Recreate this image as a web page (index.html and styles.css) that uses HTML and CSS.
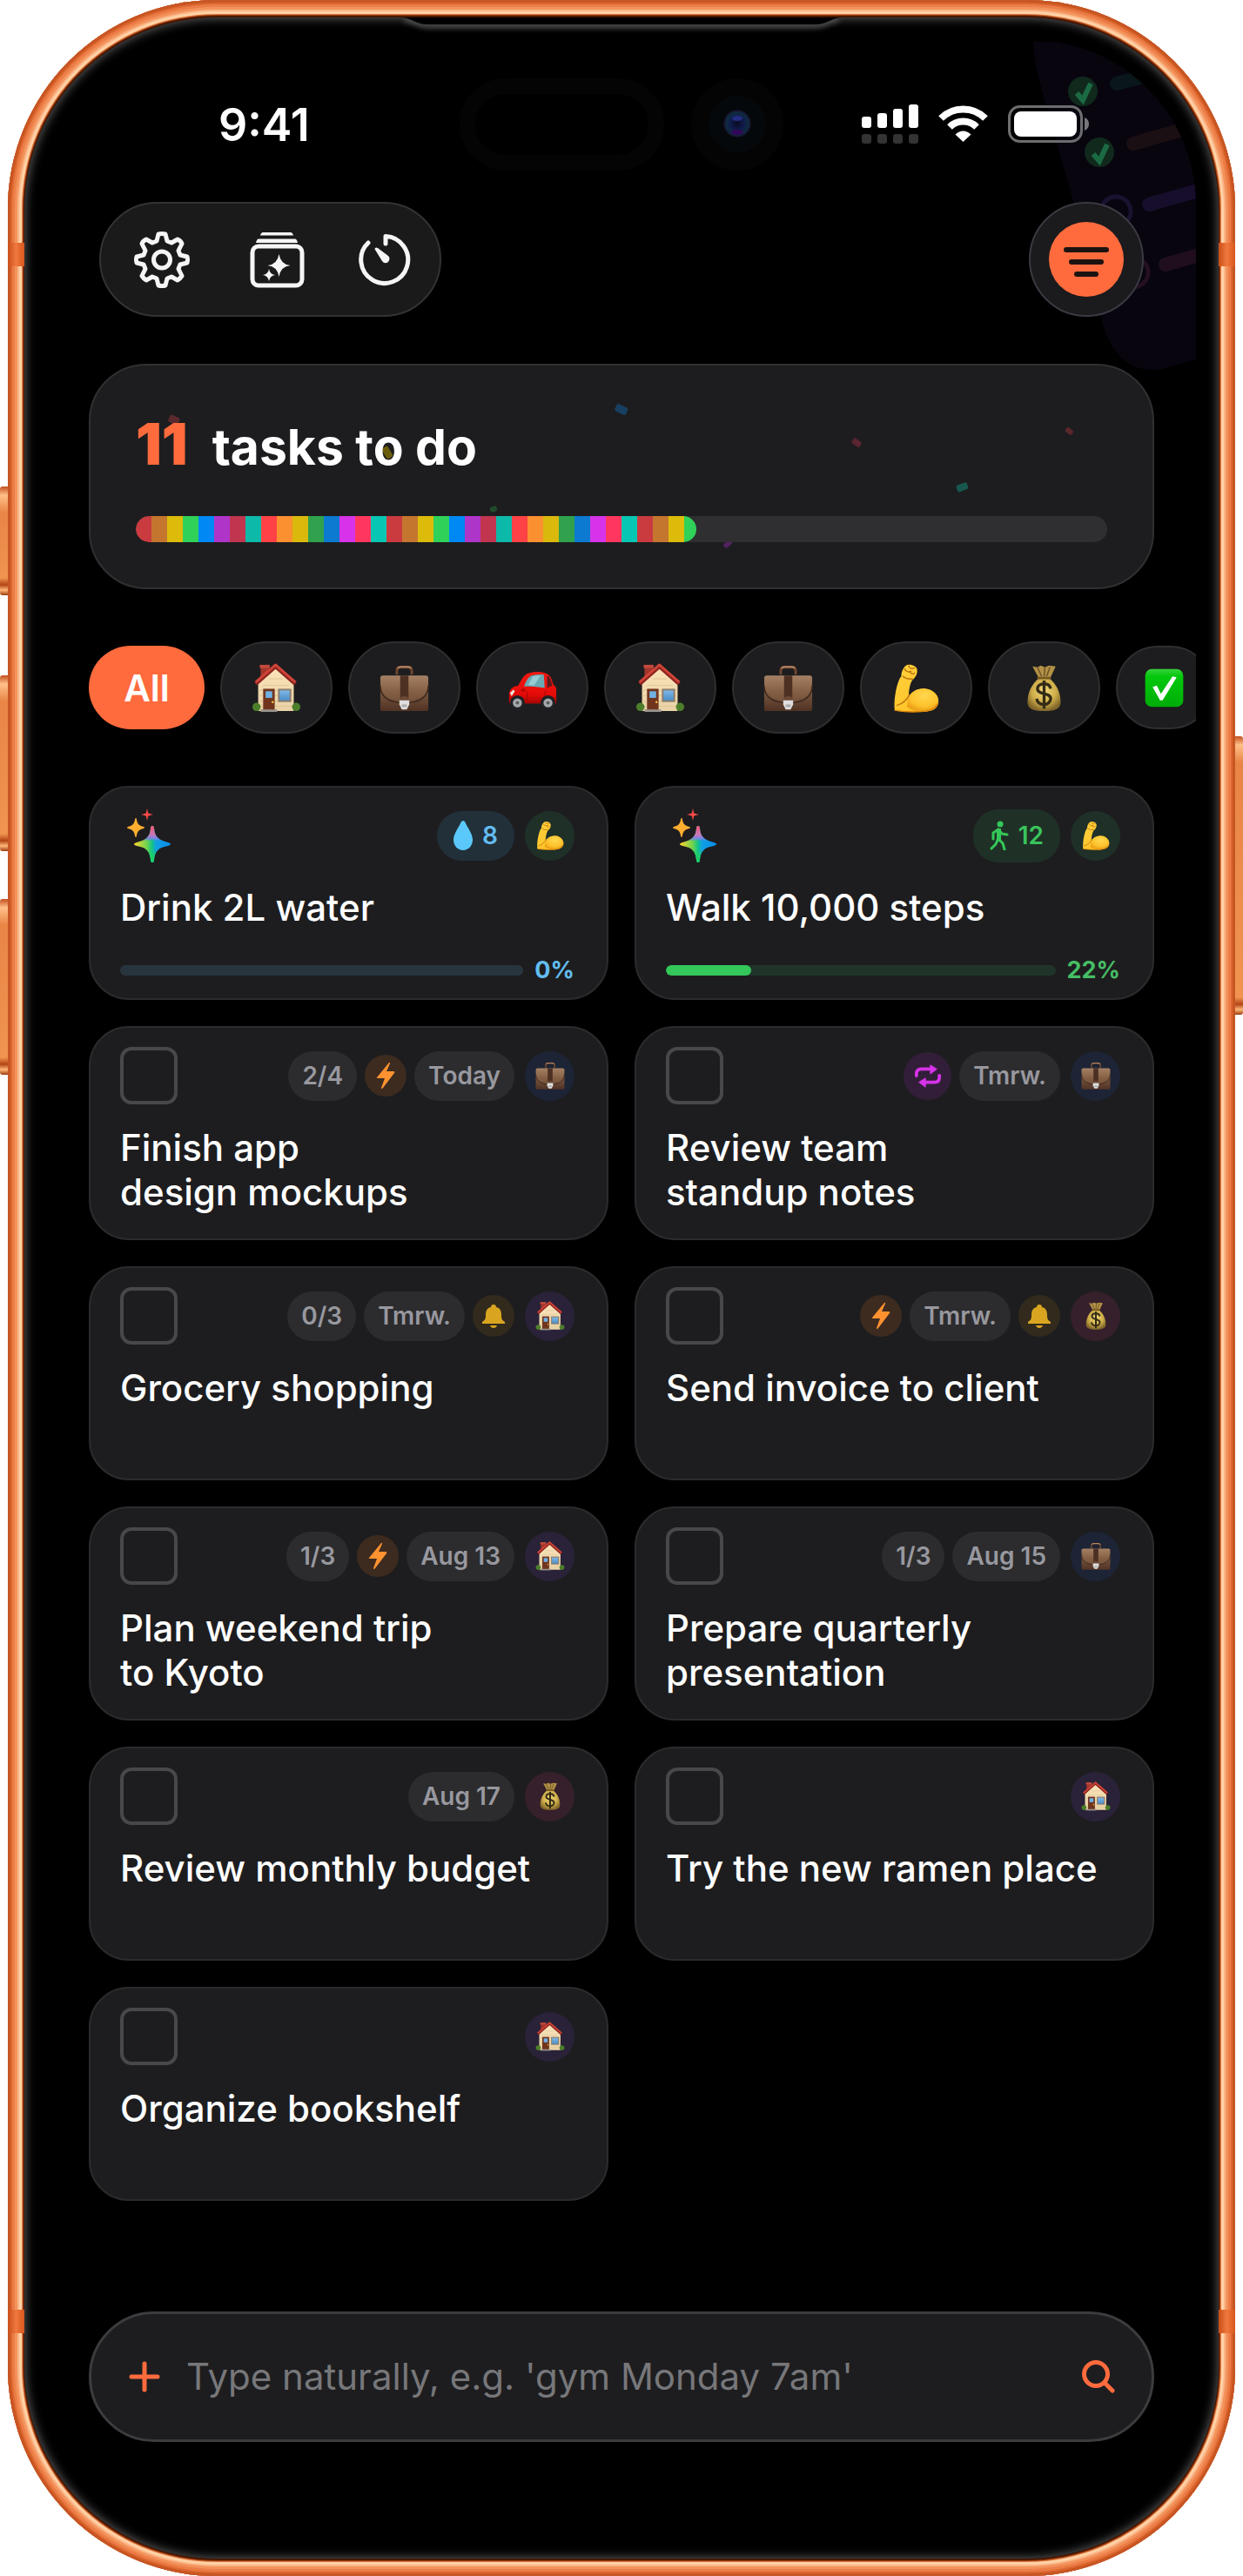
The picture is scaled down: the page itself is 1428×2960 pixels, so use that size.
FILE: index.html
```html
<!DOCTYPE html>
<html lang="en">
<head>
<meta charset="utf-8">
<meta name="viewport" content="width=device-width, initial-scale=1">
<title>Tasks</title>
<link rel="stylesheet" href="styles.css">
</head>
<body>
<svg class="defs" width="0" height="0" aria-hidden="true">
  <defs>
    <linearGradient id="wall" x1="0" y1="0" x2="0" y2="1"><stop offset="0" stop-color="#fbe3ba"/><stop offset="1" stop-color="#e8d2a6"/></linearGradient>
    <linearGradient id="glass" x1="0" y1="0" x2="0" y2="1"><stop offset="0" stop-color="#7db8e8"/><stop offset="1" stop-color="#4d8fc9"/></linearGradient>
    <linearGradient id="leather" x1="0" y1="0" x2="0" y2="1"><stop offset="0" stop-color="#a88468"/><stop offset=".45" stop-color="#7b583f"/><stop offset="1" stop-color="#4f3225"/></linearGradient>
    <linearGradient id="skin" x1="0" y1="0" x2="1" y2="1"><stop offset="0" stop-color="#ffd23e"/><stop offset=".6" stop-color="#ffc52b"/><stop offset="1" stop-color="#e89a12"/></linearGradient>
    <radialGradient id="bicep" cx=".55" cy=".3" r=".75"><stop offset="0" stop-color="#ffd84f"/><stop offset=".6" stop-color="#fdc22c"/><stop offset="1" stop-color="#e5940f"/></radialGradient>
    <linearGradient id="paint" x1="0" y1="0" x2="0" y2="1"><stop offset="0" stop-color="#f01a12"/><stop offset=".7" stop-color="#e60b08"/><stop offset="1" stop-color="#a80505"/></linearGradient>
    <radialGradient id="sack" cx=".5" cy=".4" r=".6"><stop offset="0" stop-color="#f2d777"/><stop offset=".6" stop-color="#cfae4a"/><stop offset="1" stop-color="#80652a"/></radialGradient>
    <linearGradient id="tick" x1="0" y1="0" x2="0" y2="1"><stop offset="0" stop-color="#39d33c"/><stop offset=".2" stop-color="#04c80c"/><stop offset="1" stop-color="#00ad08"/></linearGradient>
    <linearGradient id="spectrum" x1="0" x2="1"><stop offset="0" stop-color="#ffd22e"/><stop offset=".35" stop-color="#6fd44d"/><stop offset=".5" stop-color="#12c389"/><stop offset=".6" stop-color="#0fa0e0"/><stop offset="1" stop-color="#0b8dea"/></linearGradient>
    <linearGradient id="spectrum-top" x1="0" y1="0" x2="0" y2="1"><stop offset="0" stop-color="#f4567a"/><stop offset=".24" stop-color="#c777b5"/><stop offset=".34" stop-color="#7f83e6"/><stop offset=".42" stop-color="#4a90e8" stop-opacity="0"/><stop offset=".65" stop-color="#1ccf5f" stop-opacity="0"/><stop offset=".85" stop-color="#1ccf6a"/></linearGradient>
    <radialGradient id="lens" cx=".5" cy=".5" r=".5"><stop offset="0" stop-color="#0a0c22"/><stop offset=".5" stop-color="#111a4c"/><stop offset=".8" stop-color="#0d2c40"/><stop offset="1" stop-color="#1a1230"/></radialGradient>

    <symbol id="house" viewBox="0 0 60 60">
      <path d="M11 3h10v20H11z" fill="#a3362c"/><path d="M10 2h12v4H10z" fill="#c34a3c"/>
      <path d="M8 25 29 5l22 20v33H8z" fill="url(#wall)"/>
      <path d="M8 33h43M8 39h43M8 46h43M8 52h43M14 27h31M21 19h17" stroke="#dcc08e" stroke-width=".8"/>
      <path d="M5 25 29 4l24 21" fill="none" stroke="#8e241f" stroke-width="5" stroke-linejoin="round"/><path d="M5 23 29 2l24 21" fill="none" stroke="#cf4438" stroke-width="3" stroke-linejoin="round"/>
      <path d="M14 31h14v26H14z" fill="#71351f"/><path d="M17 34h8v8h-8z" fill="#6fb1e4"/><circle cx="25.500" cy="47" r="1.300" fill="#f5c542"/>
      <path d="M32 31h16v16H32z" fill="#8a7b6c"/><path d="M34 33h12v12H34z" fill="url(#glass)"/>
      <circle cx="6" cy="53" r="5" fill="#4d7f2b"/><circle cx="54" cy="53" r="5" fill="#4d7f2b"/><path d="M11 56h20v3H11z" fill="#9a948c"/>
    </symbol>
    <symbol id="briefcase" viewBox="0 0 60 60">
      <path d="M21 14V9q0-4 4-4h10q4 0 4 4v5" fill="none" stroke="#6d4630" stroke-width="3"/><path d="M22 6.500q1-2 4-2h8q3 0 4 2" fill="none" stroke="#b78562" stroke-width="2"/>
      <rect x="1" y="15" width="58" height="43" rx="3" fill="url(#leather)"/>
      <path d="M1 27c0 15 12 21 29 21s29-6 29-21" fill="none" stroke="#3f281c" stroke-width="1.500"/>
      <path d="M2 27C3 40 14 46 30 46s27-6 28-19V17H2z" fill="#a07657" opacity=".28"/>
      <path d="M25 15h10v29H25z" fill="#4d3022"/><path d="M24 46q0-6 6-6t6 6z" fill="#6b4935"/>
      <path d="M24 45h12v5l-3 6h-6l-3-6z" fill="#dedede"/><path d="M27 50h6v3h-6z" fill="#aaa"/>
    </symbol>
    <symbol id="arm" viewBox="0 0 60 60">
      <path d="M4 57C3 46 5 33 8 24c1-3 2-6 4-8 0-6 3-12 7-14 4-1 11 1 12 5 1 5-1 9-5 13-3 3-5 12-5 21 4-7 12-11 21-10 9 1 15 8 15 15 0 9-8 13-22 13-12 0-23 0-31-2z" fill="url(#skin)"/>
      <path d="M20 43c3-8 11-13 21-12 10 1 16 8 16 15 0 9-8 13-21 13 0 0-8-1-17-6z" fill="url(#bicep)"/>
      <path d="M16 7q3 5 8 3m-3-7q1 5 7 3m-5 4q1 5 5 2M14 16q5 4 12 3M7 51q10-3 15-13" fill="none" stroke="#ba7410" stroke-width="1.400" stroke-linecap="round"/>
      <path d="M4 57q24 4 42 0 8-3 10-8" fill="none" stroke="#dc850c" stroke-width="1.500"/>
    </symbol>
    <symbol id="car" viewBox="0 0 60 60">
      <path d="M2 47V36c1-5 5-8 11-9 4-7 7-14 13-15q10-3 20 0 7 2 9 13l4 5v19H2z" fill="url(#paint)"/>
      <path d="M20 28q4-11 9-13 9-2 15-1l1 16q-12-2-25-2z" fill="#69aab5"/><path d="M25 26 31 16q5-1 9-1l-8 12z" fill="#99ccd2"/>
      <path d="M48 15q4 1 6 12l-6 3z" fill="#581a1b"/><path d="M22 31q-5-1-6 2 2 3 6 1z" fill="#bb0808"/>
      <path d="m3 36 4-4 2 2-4 6z" fill="#e9e5dd"/><path d="M24 34v13h20l2-14" fill="none" stroke="#9e0808" stroke-width="1"/>
      <circle cx="12" cy="48" r="9" fill="#202125"/><circle cx="12" cy="48" r="5.500" fill="#a4a8aa"/><circle cx="12" cy="48" r="2" fill="#55595b"/>
      <circle cx="49" cy="48" r="9" fill="#202125"/><circle cx="49" cy="48" r="5.500" fill="#a4a8aa"/><circle cx="49" cy="48" r="2" fill="#55595b"/>
    </symbol>
    <symbol id="money" viewBox="0 0 60 60">
      <path d="m16 4 6 1 4-2 5 2 5-2 8 1-7 15H24z" fill="#b39146"/><path d="m22 5 5 11m4-11-1 11m7-11-4 11" stroke="#695226" stroke-width="1.500"/>
      <path d="M24 18h12c9 7 14 18 14 29 0 7-5 11-20 11s-20-4-20-11c0-11 5-22 14-29z" fill="url(#sack)"/><path d="M23 18h14" stroke="#755920" stroke-width="3" stroke-linecap="round"/>
      <path d="M38 31c-1-5-4-6-8-6s-8 2-8 6c0 8 16 4 16 12 0 4-4 7-8 7s-8-2-9-7M30 21v34" fill="none" stroke="#332b16" stroke-width="3.500"/>
    </symbol>
    <symbol id="done" viewBox="0 0 60 60"><rect x="7" y="7" width="46" height="46" rx="8" fill="url(#tick)"/><path d="m16 29 5-2 5 10L40 16l5 1-17 28h-3z" fill="#fff"/></symbol>
    <symbol id="bolt" viewBox="0 0 32 32"><path d="M20 1 6 18q-1 1 1 1h8l-4 11q0 2 2 0l13-17q1-2-1-2h-8l4-9q0-2-1-1z" fill="#ff9230"/></symbol>
    <symbol id="bell" viewBox="0 0 32 32"><path d="M16 3c2 0 3 1 3 3 5 1 6 5 6 9 0 5 1 6 4 8v2H3v-2c3-2 4-3 4-8 0-4 1-8 6-9 0-2 1-3 3-3zM12 27h8q-1 3-4 3t-4-3z" fill="#d9a521"/></symbol>
    <symbol id="repeat" viewBox="0 0 34 34"><path d="M3 17v-2q0-6 6-6h12M31 17v2q0 6-6 6H13" fill="none" stroke="#d633ea" stroke-width="4" stroke-linecap="round"/><path d="m20 4 8 5-8 6zM14 20l-8 5 8 6z" fill="#d633ea" stroke="#d633ea" stroke-width="1" stroke-linejoin="round"/></symbol>
    <symbol id="sparkle" viewBox="0 0 66 66">
      <path d="M37 22q2 0 2 3c1 9 4 13 16 16 4 1 4 3 0 4-12 2-15 7-16 16q0 3-2 3t-2-3c-1-9-4-14-16-16-4-1-4-3 0-4 12-3 15-7 16-16q0-3 2-3z" fill="url(#spectrum)"/>
      <path d="M37 22q2 0 2 3c1 9 4 13 16 16 4 1 4 3 0 4-12 2-15 7-16 16q0 3-2 3t-2-3c-1-9-4-14-16-16-4-1-4-3 0-4 12-3 15-7 16-16q0-3 2-3z" fill="url(#spectrum-top)"/>
      <path d="M18 13q1 0 1 2c1 5 3 7 8 8q2 1 0 2c-5 1-7 3-8 8q0 2-1 2t-1-2c-1-5-3-7-8-8q-2-1 0-2c5-1 7-3 8-8q0-2 1-2z" fill="#ffae30"/>
      <path d="M31 2q1 4 1 5 1 1 6 2-5 1-6 2 0 1-1 5-1-4-1-5-1-1-6-2 5-1 6-2 0-1 1-5z" fill="#ff4a48"/>
    </symbol>
  </defs>
</svg>

<div class="phone">
  <span class="key key-action"></span><span class="key key-up"></span><span class="key key-down"></span><span class="key key-power"></span>
  <div class="frame">
    <span class="band band-tl"></span><span class="band band-tr"></span><span class="band band-bl"></span><span class="band band-br"></span>
    <div class="bezel">
      <svg class="earpiece" viewBox="0 0 510 26" aria-hidden="true"><defs><filter id="soft" x="-5%" y="-100%" width="110%" height="400%"><feGaussianBlur stdDeviation="3"/></filter></defs><path d="M6 2c12 0 14 7 26 7h446c12 0 14-7 26-7" fill="none" stroke="#5a5a5a" stroke-width="6" filter="url(#soft)"/><path d="M0 0h510c-14 0-18 8-32 8H32C18 8 14 0 0 0z" fill="#000"/></svg>
      <main class="screen">
        <svg class="ghost" viewBox="0 0 190 380" aria-hidden="true">
          <path d="M3 2 190 0v367l-35 10c-30 8-60-6-72-51L49 186 11 50Q3 20 3 2z" fill="#08050f"/>
          <circle cx="60" cy="59" r="17" fill="#10291c"/><path d="m53 61 7 8 9-19" fill="none" stroke="#1b6a43" stroke-width="6"/>
          <circle cx="79" cy="129" r="17" fill="#10291c"/><path d="m72 131 7 8 9-19" fill="none" stroke="#1b6a43" stroke-width="6"/>
          <circle cx="98" cy="197" r="17" fill="none" stroke="#1a1230" stroke-width="5"/><circle cx="118" cy="267" r="17" fill="none" stroke="#241020" stroke-width="5"/>
          <g stroke-width="16" stroke-linecap="round"><path d="m99 50 60-16" stroke="#0a171a"/><path d="m118 119 70-20" stroke="#1a0f13"/><path d="m136 189 70-20" stroke="#170e2c"/><path d="m155 258 70-20" stroke="#200e1f"/></g>
        </svg>

        <header class="status">
          <time class="clock">9:41</time>
          <svg class="island" viewBox="0 0 372 106" aria-hidden="true"><rect x="9" y="9" width="217" height="88" rx="44" fill="none" stroke="#040404" stroke-width="18"/><circle cx="319" cy="53" r="53" fill="#040404"/><circle cx="319" cy="53" r="33" fill="#05080b"/><circle cx="319" cy="52" r="15.500" fill="url(#lens)"/><ellipse cx="319" cy="46" rx="6" ry="3" fill="#232e80"/><ellipse cx="319" cy="62" rx="7" ry="3" fill="#33065a"/></svg>
          <svg class="signals" viewBox="0 0 262 46" role="img" aria-label="Signal, Wi-Fi and battery full">
            <g fill="#fff"><rect x="0" y="14" width="11" height="13" rx="3"/><rect x="18" y="10" width="11" height="17" rx="3"/><rect x="36" y="5" width="11" height="22" rx="3"/><rect x="54" y="0" width="11" height="27" rx="3"/></g>
            <g fill="#333"><rect x="0" y="34" width="11" height="11" rx="3"/><rect x="18" y="34" width="11" height="11" rx="3"/><rect x="36" y="34" width="11" height="11" rx="3"/><rect x="54" y="34" width="11" height="11" rx="3"/></g>
            <g fill="none" stroke="#fff" stroke-width="8"><path d="M91 16a36 36 0 0 1 51 0"/><path d="M101 26a22 22 0 0 1 31 0"/></g><path d="m107.500 34.500 9 8.500 9-8.500q-9-8-18 0z" fill="#fff"/>
            <rect x="169.500" y="2.500" width="83" height="40" rx="12" fill="none" stroke="#6d6d70" stroke-width="3"/><rect x="175" y="8" width="72" height="29" rx="8" fill="#fff"/><path d="M256 15q5 2 5 7.500t-5 7.500z" fill="#77777a"/>
          </svg>
        </header>

        <nav class="toolbar">
          <div class="tools">
            <button class="tool" aria-label="Settings"><svg viewBox="0 0 66 66"><path d="M29 4q4-1 8 0l2 8 5 2 7-4q4 2 5 5l-4 8 2 5 8 2q1 3 0 7l-8 2-2 5 4 8q-2 3-5 5l-7-4-5 2-2 8q-4 1-8 0l-2-8-5-2-7 4q-3-2-5-5l4-8-2-5-8-2q-1-4 0-7l8-2 2-5-4-8q1-3 5-5l7 4 5-2z"/><circle cx="33" cy="33.500" r="9.500"/></svg></button>
            <button class="tool" aria-label="Smart lists"><svg viewBox="0 0 66 66"><rect x="5" y="18" width="57" height="45" rx="7"/><path d="M17 2h32q2 0 3 3.500H14Q15 2 17 2zM12 9.500h42q2 0 3 4.500H9q1-4.500 3-4.500zM35.500 27q2 12 13 13-11 1-13 13-2-12-13-13 11-1 13-13zM24 44q1 6 7 7-6 1-7 7-1-6-7-7 6-1 7-7z" class="solid"/></svg></button>
            <button class="tool tool-last" aria-label="Timer"><svg viewBox="0 0 66 66"><path d="M33 15V6.500a27 27 0 1 1-20 7.500"/><path d="M21 20q1-1 3 0l12 9q3 3 0 7-4 3-7-1l-8-13q-1-1 0-2z" class="solid"/></svg></button>
          </div>
          <button class="filter" aria-label="Filter and sort"><svg viewBox="0 0 86 86"><circle cx="43" cy="43" r="43" fill="#ff6b3d"/><path d="M20 32h46M26 46h34M32 60h22" stroke="#1c1310" stroke-width="6" stroke-linecap="round"/></svg></button>
        </nav>

        <section class="summary">
          <svg class="confetti" viewBox="0 0 1224 259" aria-hidden="true">
            <rect x="92" y="60" width="12" height="9" rx="2" transform="rotate(25 98 64)" fill="#5c2a2e"/><rect x="605" y="48" width="14" height="9" rx="2" transform="rotate(25 612 52)" fill="#173f61"/><rect x="336" y="98" width="14" height="8" rx="2" transform="rotate(60 343 102)" fill="#6b5c0c"/><rect x="461" y="164" width="8" height="6" rx="2" transform="rotate(-20 465 167)" fill="#1f4b2d"/><rect x="729" y="204" width="10" height="6" rx="2" transform="rotate(-40 734 207)" fill="#522260"/><rect x="877" y="87" width="11" height="7" rx="2" transform="rotate(35 882 90)" fill="#5b2531"/><rect x="1122" y="74" width="9" height="6" rx="2" transform="rotate(40 1126 77)" fill="#5a272b"/><rect x="997" y="138" width="13" height="8" rx="2" transform="rotate(-20 1003 142)" fill="#17574e"/>
          </svg>
          <h1 class="headline"><span class="count">11</span> tasks to do</h1>
          <div class="rainbow" role="progressbar" aria-label="Completed tasks" aria-valuenow="58" aria-valuemin="0" aria-valuemax="100"><div class="rainbow-fill"></div></div>
        </section>

        <div class="chips">
          <button class="chip chip-all">All</button>
          <button class="chip" aria-label="Home"><svg><use href="#house"/></svg></button>
          <button class="chip" aria-label="Work"><svg><use href="#briefcase"/></svg></button>
          <button class="chip" aria-label="Car"><svg><use href="#car"/></svg></button>
          <button class="chip" aria-label="House"><svg><use href="#house"/></svg></button>
          <button class="chip" aria-label="Office"><svg><use href="#briefcase"/></svg></button>
          <button class="chip" aria-label="Health"><svg><use href="#arm"/></svg></button>
          <button class="chip" aria-label="Money"><svg><use href="#money"/></svg></button>
          <button class="chip chip-done" aria-label="Done"><svg><use href="#done"/></svg></button>
        </div>

        <section class="grid">
          <article class="card">
            <div class="top"><svg class="spark"><use href="#sparkle"/></svg><div class="badges"><span class="badge water"><svg viewBox="0 0 22 34"><path d="M11 0q2 0 3 3c2 5 8 12 8 19 0 7-5 12-11 12S0 29 0 22C0 15 6 8 8 3q1-3 3-3z" fill="#5ac8fa"/></svg>8</span><span class="emoji health"><svg><use href="#arm"/></svg></span></div></div>
            <h2 class="title">Drink 2L water</h2>
            <div class="goal water-goal"><div class="track"><div class="fill" style="width:0%"></div></div><span>0%</span></div>
          </article>
          <article class="card">
            <div class="top"><svg class="spark"><use href="#sparkle"/></svg><div class="badges"><span class="badge walk"><svg viewBox="0 0 22 34"><circle cx="12" cy="4" r="3.500" fill="#34c759"/><path d="M10 10 4 14v7M10 10l4 5 6 1M10 10v11l5 5 2 7M9 22l-2 5-5 5" fill="none" stroke="#34c759" stroke-width="3" stroke-linecap="round" stroke-linejoin="round"/><path d="M8 9h5v13H8z" fill="#34c759"/></svg>12</span><span class="emoji health"><svg><use href="#arm"/></svg></span></div></div>
            <h2 class="title">Walk 10,000 steps</h2>
            <div class="goal walk-goal"><div class="track"><div class="fill" style="width:22%"></div></div><span>22%</span></div>
          </article>
          <article class="card">
            <div class="top"><input type="checkbox" id="t1"><div class="badges"><span class="badge">2/4</span><span class="dot urgent"><svg><use href="#bolt"/></svg></span><span class="badge">Today</span><span class="emoji work"><svg><use href="#briefcase"/></svg></span></div></div>
            <label class="title" for="t1">Finish app<br>design mockups</label>
          </article>
          <article class="card">
            <div class="top"><input type="checkbox" id="t2"><div class="badges"><span class="dot loop"><svg><use href="#repeat"/></svg></span><span class="badge">Tmrw.</span><span class="emoji work"><svg><use href="#briefcase"/></svg></span></div></div>
            <label class="title" for="t2">Review team<br>standup notes</label>
          </article>
          <article class="card">
            <div class="top"><input type="checkbox" id="t3"><div class="badges"><span class="badge">0/3</span><span class="badge">Tmrw.</span><span class="dot alarm"><svg><use href="#bell"/></svg></span><span class="emoji home"><svg><use href="#house"/></svg></span></div></div>
            <label class="title" for="t3">Grocery shopping</label>
          </article>
          <article class="card">
            <div class="top"><input type="checkbox" id="t4"><div class="badges"><span class="dot urgent"><svg><use href="#bolt"/></svg></span><span class="badge">Tmrw.</span><span class="dot alarm"><svg><use href="#bell"/></svg></span><span class="emoji cash"><svg><use href="#money"/></svg></span></div></div>
            <label class="title" for="t4">Send invoice to client</label>
          </article>
          <article class="card">
            <div class="top"><input type="checkbox" id="t5"><div class="badges"><span class="badge">1/3</span><span class="dot urgent"><svg><use href="#bolt"/></svg></span><span class="badge">Aug 13</span><span class="emoji home"><svg><use href="#house"/></svg></span></div></div>
            <label class="title" for="t5">Plan weekend trip<br>to Kyoto</label>
          </article>
          <article class="card">
            <div class="top"><input type="checkbox" id="t6"><div class="badges"><span class="badge">1/3</span><span class="badge">Aug 15</span><span class="emoji work"><svg><use href="#briefcase"/></svg></span></div></div>
            <label class="title" for="t6">Prepare quarterly<br>presentation</label>
          </article>
          <article class="card">
            <div class="top"><input type="checkbox" id="t7"><div class="badges"><span class="badge">Aug 17</span><span class="emoji cash"><svg><use href="#money"/></svg></span></div></div>
            <label class="title" for="t7">Review monthly budget</label>
          </article>
          <article class="card">
            <div class="top"><input type="checkbox" id="t8"><div class="badges"><span class="emoji home"><svg><use href="#house"/></svg></span></div></div>
            <label class="title" for="t8">Try the new ramen place</label>
          </article>
          <article class="card">
            <div class="top"><input type="checkbox" id="t9"><div class="badges"><span class="emoji home"><svg><use href="#house"/></svg></span></div></div>
            <label class="title" for="t9">Organize bookshelf</label>
          </article>
        </section>

        <form class="composer">
          <button type="button" aria-label="Add task"><svg viewBox="0 0 40 40"><path d="M20 5v30M5 20h30"/></svg></button>
          <input type="text" aria-label="New task" placeholder="Type naturally, e.g. 'gym Monday 7am'">
          <button type="button" aria-label="Search"><svg viewBox="0 0 40 40"><circle cx="17" cy="17" r="13.500"/><path d="m27 27 9 9"/></svg></button>
        </form>
      </main>
    </div>
  </div>
</div>
</body>
</html>
```
FILE: styles.css
```css
* { box-sizing: border-box; }

body {
  margin: 0;
  background: #fff;
  color: #fff;
  font-family: Inter, "Liberation Sans", sans-serif;
}

button { padding: 0; border: 0; background: none; color: inherit; font: inherit; }
svg { display: block; }
.defs { position: absolute; }

/* Device body */
.phone { position: relative; display: flex; min-height: 100vh; padding: 0 9px; }

.frame {
  position: relative;
  display: flex;
  flex: 1;
  min-width: 0;
  padding: 20px 19px;
  border-radius: 240px;
  background: #4a1800;
  box-shadow:
    inset 0 0 0 1px #c4582c,
    inset 0 0 0 3px #c9551f,
    inset 0 0 0 5px #dc6731,
    inset 0 0 0 8px #ec7d47,
    inset 0 0 0 11px #f3935c,
    inset 0 0 0 13px #fbb587,
    inset 0 0 0 16px #ffd2a6,
    inset 0 0 0 17px #e07c42,
    inset 0 0 0 18px #9c3a10;
}

.bezel {
  position: relative;
  display: flex;
  flex: 1;
  min-width: 0;
  padding: 26px;
  border-radius: 221px;
  background: #000;
  box-shadow: inset 0 0 12px 1px #5e5e5e;
}

.earpiece { position: absolute; top: 0; left: 50%; width: 510px; height: 26px; transform: translateX(-50%); }

.band { position: absolute; width: 19px; height: 27px; background: linear-gradient(90deg, #c94f17, #f0783f 50%, #d9571b); }
.band-tl { top: 279px; left: 0; }
.band-tr { top: 279px; right: 0; }
.band-bl { bottom: 279px; left: 0; }
.band-br { bottom: 279px; right: 0; }

.key {
  position: absolute;
  left: 0;
  width: 11px;
  border-radius: 3px 0 0 3px;
  background: linear-gradient(180deg, #c4501f, #ffc088 10px, #e98545 30px, #f09450 calc(100% - 20px), #b34515 calc(100% - 12px), #ffb878 calc(100% - 6px), #9c3a10);
}
.key-action { top: 559px; height: 125px; }
.key-up { top: 776px; height: 202px; }
.key-down { top: 1033px; height: 202px; }
.key-power { top: 846px; left: auto; right: 0; height: 320px; border-radius: 0 3px 3px 0; }

.screen {
  position: relative;
  display: flex;
  flex: 1;
  flex-direction: column;
  min-width: 0;
  padding: 0 48px 108px;
  overflow: hidden;
  border-radius: 190px;
}

.ghost { position: absolute; top: 0; right: 0; width: 190px; height: 380px; }

/* Status bar */
.status { position: relative; display: grid; grid-template-columns: 1fr auto 1fr; align-items: center; padding: 44px 74px 36px; }
.clock { padding: 2px 0 0 75px; font-size: 52px; font-weight: 600; line-height: 60px; }
.island { width: 372px; height: 106px; }
.signals { justify-self: end; width: 262px; height: 46px; }

/* Toolbar */
.toolbar { position: relative; display: flex; justify-content: space-between; padding: 0 12px; }
.tools { display: flex; padding: 0 3px 0 4px; border: 2px solid #333; border-radius: 66px; background: #1a1a1a; }
.tool { display: grid; width: 132px; height: 128px; place-items: center; }
.tool-last { width: 118px; }
.tool svg { width: 66px; height: 66px; fill: none; stroke: #f5f5f5; stroke-width: 5; stroke-linejoin: round; stroke-linecap: round; }
.tool .solid { fill: #f5f5f5; stroke: none; }
.filter { display: grid; width: 132px; height: 132px; place-items: center; border: 2px solid #3b3942; border-radius: 50%; background: #1b1a1d; }
.filter svg { width: 86px; height: 86px; }

/* Summary */
.summary { position: relative; margin-top: 54px; padding: 56px 52px 52px; border: 2px solid #303032; border-radius: 66px; background: #1d1d1f; }
.confetti { position: absolute; top: -2px; left: -2px; width: 1224px; height: 259px; }
.headline { position: relative; display: flex; align-items: baseline; gap: 28px; height: 72px; margin: 0 0 45px; font-size: 57px; font-weight: 700; line-height: 68px; }
.count { color: #ff6b3d; font-size: 66px; font-weight: 900; }
.rainbow { position: relative; height: 30px; overflow: hidden; border-radius: 15px; background: #2f2f31; }
.rainbow-fill {
  width: 644px;
  height: 30px;
  border-radius: 15px;
  background: repeating-linear-gradient(90deg,
    #c93b3f 0 18px, #c4762f 18px 36px, #ddbb0a 36px 54px, #30d158 54px 72px,
    #0088f5 72px 90px, #af35c8 90px 108px, #c1354f 108px 126px, #0db9a8 126px 144px,
    #ff4245 144px 162px, #fb9030 162px 180px, #dab90c 180px 198px, #30a14c 198px 216px,
    #0b7ad0 216px 234px, #d633ea 234px 252px, #ff375f 252px 270px, #06c7b3 270px 288px);
}

/* Category chips */
.chips { display: flex; align-items: center; gap: 18px; margin: 60px -48px 60px 0; overflow: hidden; }
.chip { display: grid; flex: none; width: 129px; height: 106px; place-items: center; border: 2px solid #2e2e30; border-radius: 53px; background: #1d1d1f; }
.chip svg { width: 57px; height: 57px; }
.chip-all { width: 133px; height: 96px; border: 0; background: #ff6b3d; font-size: 42px; font-weight: 600; }
.chip-done { width: 111px; height: 96px; }

/* Task cards */
.grid { display: grid; grid-template-columns: 1fr 1fr; gap: 30px; }
.card { min-height: 246px; padding: 22px 37px 14px 34px; border: 2px solid #2b2b2d; border-radius: 46px; background: #1d1d1f; }
.top { display: flex; align-items: center; justify-content: space-between; height: 66px; }
.card input { appearance: none; width: 66px; height: 66px; margin: 0; border: 4px solid #48484a; border-radius: 13px; }
.spark { width: 66px; height: 66px; }
.badges { display: flex; align-items: center; gap: 9px; }
.badge { display: flex; align-items: center; gap: 11px; height: 57px; padding: 0 16px; border-radius: 29px; background: #2c2c2e; color: #98989f; font-size: 28px; font-weight: 600; line-height: 34px; }
.water { padding: 0 19px; background: #22303a; color: #62bdf0; }
.walk { height: 61px; padding: 0 19px; background: #1f3126; color: #3ac45d; }
.badge svg { width: 22px; height: 34px; }
.dot { display: grid; width: 48px; height: 48px; place-items: center; border-radius: 50%; }
.dot svg { width: 32px; height: 32px; }
.urgent { background: #3d2b20; }
.urgent svg { height: 36px; }
.alarm { background: #322a1d; }
.loop { width: 55px; height: 55px; background: #321e38; }
.emoji { display: grid; width: 57px; height: 57px; margin-left: 3px; place-items: center; border-radius: 50%; }
.emoji svg { width: 34px; height: 34px; }
.health { background: #1f3028; }
.work { background: #1d2435; }
.home { background: #2a2238; }
.cash { background: #36202b; }
.title { display: block; margin: 24px 0 0; font-size: 42px; font-weight: 500; line-height: 51px; white-space: nowrap; }
.goal { display: flex; align-items: center; gap: 13px; margin-top: 30px; font-size: 27px; font-weight: 700; line-height: 34px; }
.track { flex: 1; height: 12px; overflow: hidden; border-radius: 6px; }
.fill { height: 12px; border-radius: 6px; }
.water-goal { color: #62bdf0; }
.water-goal .track { background: #28353f; }
.walk-goal { color: #46bd64; }
.walk-goal .track { background: #20342a; }
.walk-goal .fill { background: #34c759; }

/* Composer */
.composer { display: flex; align-items: center; gap: 28px; margin-top: auto; height: 150px; padding: 0 41px; border: 3px solid #3c3c3e; border-radius: 75px; background: #1d1d1f; }
.composer input { flex: 1; min-width: 0; padding: 0; border: 0; outline: 0; background: none; color: #fff; font: 400 42px/52px Inter, "Liberation Sans", sans-serif; }
.composer input::placeholder { color: #77777a; opacity: 1; }
.composer svg { width: 40px; height: 40px; fill: none; stroke: #ff6b3d; stroke-width: 5; stroke-linecap: round; }
```
